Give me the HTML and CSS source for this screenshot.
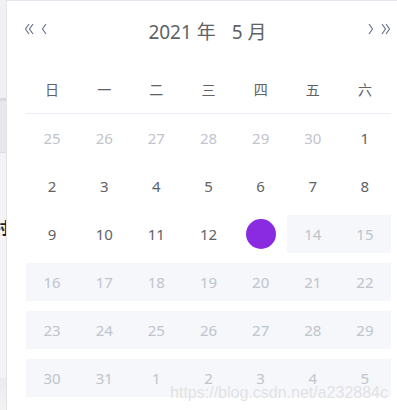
FILE: index.html
```html
<!DOCTYPE html>
<html lang="zh-CN">
	<head>
		<meta charset="UTF-8" />
		<meta name="viewport" content="width=device-width, initial-scale=1.0" />
		<title>日期选择</title>
		<link rel="stylesheet" href="styles.css">
	</head>
	<body>
		<!-- page behind the picker, only its right edge shows -->
		<aside class="page-edge">
			<div class="edge-top"></div>
			<div class="edge-band"></div>
			<div class="edge-row"></div>
			<div class="edge-rest">
				<div class="edge-text"><span>村</span></div>
			</div>
			<div class="edge-bottom"></div>
		</aside>

		<section class="picker">
			<div class="picker-header">
				<div class="nav">
					<button class="nav-btn">
						<svg viewBox="0 0 12 12" class="nav-icon">
							<polyline points="5,1 1.5,6 5,11" />
							<polyline points="9,1 5.5,6 9,11" />
						</svg>
					</button>
					<button class="nav-btn">
						<svg viewBox="0 0 12 12" class="nav-icon">
							<polyline points="7,1 3.5,6 7,11" />
						</svg>
					</button>
				</div>
				<div class="title">
					<span>2021 年</span>
					<span>5 月</span>
				</div>
				<div class="nav">
					<button class="nav-btn">
						<svg viewBox="0 0 12 12" class="nav-icon">
							<polyline points="5,1 8.5,6 5,11" />
						</svg>
					</button>
					<button class="nav-btn">
						<svg viewBox="0 0 12 12" class="nav-icon">
							<polyline points="3,1 6.5,6 3,11" />
							<polyline points="7,1 10.5,6 7,11" />
						</svg>
					</button>
				</div>
			</div>

			<div class="weekdays">
				<span>日</span><span>一</span><span>二</span><span>三</span><span>四</span><span>五</span><span>六</span>
			</div>

			<div class="days">
				<span class="day prev">25</span>
				<span class="day prev">26</span>
				<span class="day prev">27</span>
				<span class="day prev">28</span>
				<span class="day prev">29</span>
				<span class="day prev">30</span>
				<span class="day">1</span>

				<span class="day">2</span>
				<span class="day">3</span>
				<span class="day">4</span>
				<span class="day">5</span>
				<span class="day">6</span>
				<span class="day">7</span>
				<span class="day">8</span>

				<span class="day">9</span>
				<span class="day">10</span>
				<span class="day">11</span>
				<span class="day">12</span>
				<span class="day today"><i class="dot">13</i></span>
				<span class="day disabled">14</span>
				<span class="day disabled">15</span>

				<span class="day disabled">16</span>
				<span class="day disabled">17</span>
				<span class="day disabled">18</span>
				<span class="day disabled">19</span>
				<span class="day disabled">20</span>
				<span class="day disabled">21</span>
				<span class="day disabled">22</span>

				<span class="day disabled">23</span>
				<span class="day disabled">24</span>
				<span class="day disabled">25</span>
				<span class="day disabled">26</span>
				<span class="day disabled">27</span>
				<span class="day disabled">28</span>
				<span class="day disabled">29</span>

				<span class="day disabled">30</span>
				<span class="day disabled">31</span>
				<span class="day disabled">1</span>
				<span class="day disabled">2</span>
				<span class="day disabled">3</span>
				<span class="day disabled">4</span>
				<span class="day disabled">5</span>
			</div>

			<div class="watermark">https://blog.csdn.net/a232884c</div>
		</section>
	</body>
</html>
```

FILE: styles.css
```css
body {
	box-sizing: border-box;
	margin: 0;
	height: 410px;
	overflow: hidden;
	display: flex;
	font-family: "Noto Sans", "Noto Sans CJK SC", sans-serif;
	background-color: #ffffff;
}

.page-edge {
	width: 6px;
	display: flex;
	flex-direction: column;
	background-color: #f4f4f6;
	border-right: 1px solid #e2e2e8;
}

.edge-top {
	height: 98px;
	background-color: #f1f1f3;
}

.edge-band {
	height: 3px;
	background-color: #d8d9de;
}

.edge-row {
	height: 51px;
	background-color: #e7e8ec;
	border-bottom: 1px solid #dcdde2;
}

.edge-rest {
	flex: 1;
}

.edge-text {
	margin-top: 64px;
	height: 20px;
	overflow: hidden;
	display: flex;
	justify-content: flex-end;
	font-family: "Noto Sans CJK SC", sans-serif;
	font-size: 16px;
	font-weight: 700;
	line-height: 20px;
	color: #2a1c24;
}

.edge-text span {
	flex-shrink: 0;
	margin-right: -3px;
}

.edge-bottom {
	height: 32px;
	background-image: linear-gradient(to bottom, #ebebed, #f3f3f4);
}

.picker {
	position: relative;
	flex: 1;
	border-top: 1px solid #e4e7ed;
	background-color: #ffffff;
	padding: 12px 6px 0 19px;
	color: #606266;
}

.picker-header {
	height: 36px;
	display: flex;
	align-items: center;
	justify-content: space-between;
}

.nav {
	display: flex;
	align-items: center;
	gap: 3px;
	margin-top: -4px;
}

.nav:first-child {
	margin-left: -2px;
}

.nav-btn {
	border: none;
	outline: none;
	background: none;
	padding: 0;
	width: 12px;
	height: 12px;
	display: flex;
}

.nav-icon {
	width: 12px;
	height: 12px;
	fill: none;
	stroke: #5f6e8a;
	stroke-width: 1.1;
}

.title {
	display: flex;
	gap: 16px;
	font-size: 19px;
	color: #606266;
}

.weekdays {
	margin-top: 16px;
	height: 48px;
	display: grid;
	grid-template-columns: repeat(7, 1fr);
	align-items: center;
	border-bottom: 1px solid #ebeef5;
	font-family: "Noto Sans CJK SC", sans-serif;
	font-size: 14px;
	color: #606266;
}

.weekdays span {
	text-align: center;
}

.days {
	padding-top: 5px;
	display: grid;
	grid-template-columns: repeat(7, 1fr);
	grid-auto-rows: 38px;
	row-gap: 10px;
	font-size: 15px;
}

.day {
	display: flex;
	align-items: center;
	justify-content: center;
	color: #606266;
}

.day.prev {
	color: #c0c4cc;
}

.day.disabled {
	color: #c0c4cc;
	background-color: #f5f7fa;
}

.dot {
	width: 30px;
	height: 30px;
	border-radius: 50%;
	background-color: #8a2be2;
	color: #8a2be2;
	font-style: normal;
	display: flex;
	align-items: center;
	justify-content: center;
}

.watermark {
	position: absolute;
	right: 9px;
	bottom: 8px;
	font-family: "Liberation Sans", sans-serif;
	font-size: 16px;
	color: rgba(200, 200, 206, 0.55);
	text-shadow: 0 0 1px rgba(255, 255, 255, 0.9);
}
```
